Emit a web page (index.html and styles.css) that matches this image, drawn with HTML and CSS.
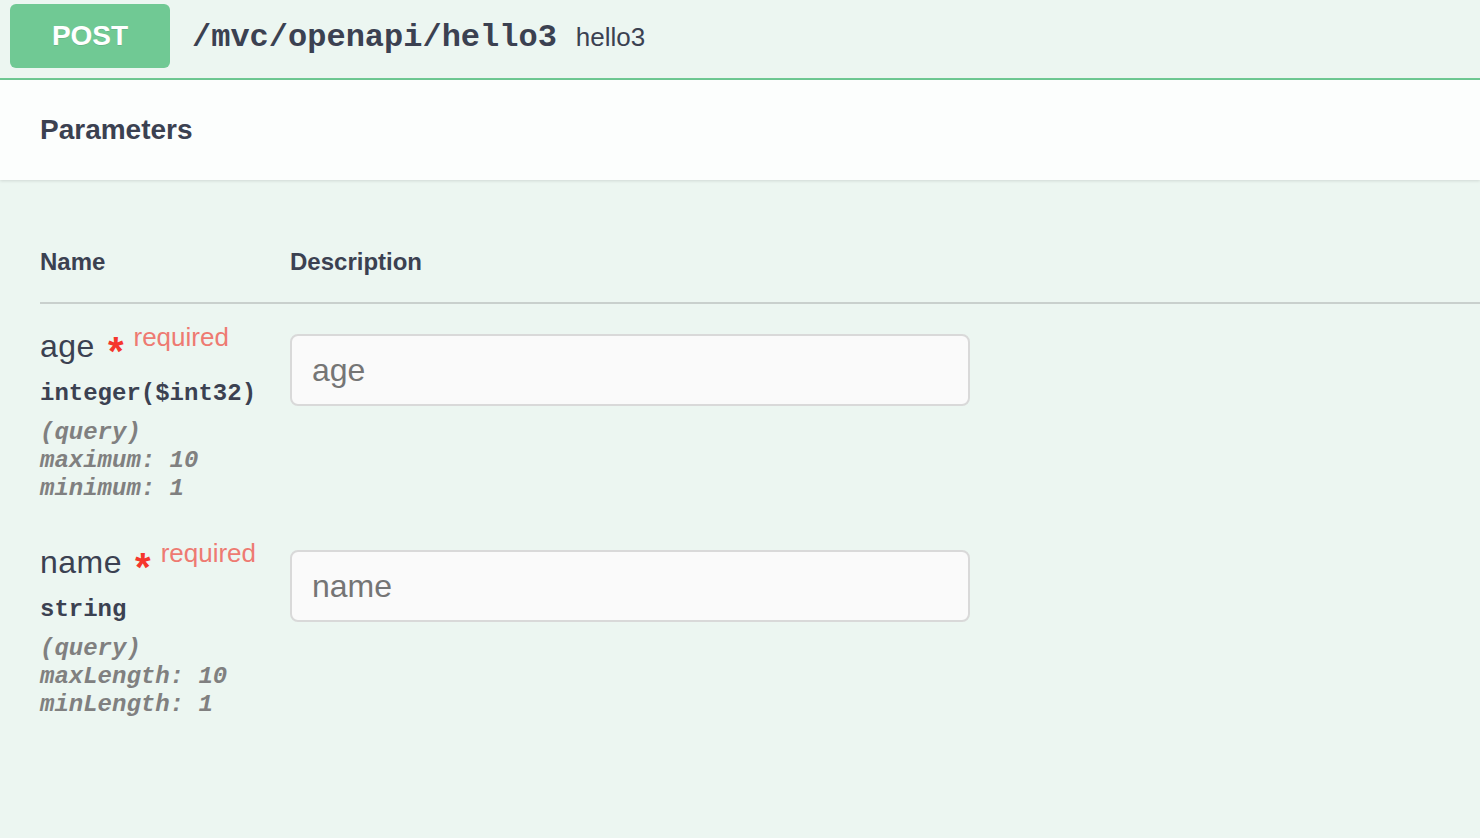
FILE: index.html
```html
<!DOCTYPE html>
<html>
<head>
<meta charset="utf-8">
<link rel="stylesheet" href="styles.css">
</head>
<body>
<div class="opblock">
  <div class="summary">
    <span class="method">POST</span>
    <span class="path">/mvc/openapi/hello3</span>
    <span class="desc">hello3</span>
  </div>
  <div class="section-header">
    <h4 class="title">Parameters</h4>
  </div>
  <div class="params">
    <div class="params-head">
      <div class="col-name">Name</div>
      <div class="col-desc">Description</div>
    </div>
    <div class="param-row">
      <div class="col-name">
        <div class="pname">age<span class="star">*</span><span class="req">required</span></div>
        <div class="ptype">integer($int32)</div>
        <div class="pin">(query)</div>
        <div class="pmeta">maximum: 10</div>
        <div class="pmeta">minimum: 1</div>
      </div>
      <div class="col-desc">
        <input class="pinput" type="text" placeholder="age">
      </div>
    </div>
    <div class="param-row">
      <div class="col-name">
        <div class="pname">name<span class="star">*</span><span class="req">required</span></div>
        <div class="ptype">string</div>
        <div class="pin">(query)</div>
        <div class="pmeta">maxLength: 10</div>
        <div class="pmeta">minLength: 1</div>
      </div>
      <div class="col-desc">
        <input class="pinput" type="text" placeholder="name">
      </div>
    </div>
  </div>
</div>
</body>
</html>
```

FILE: styles.css
```css
html, body {
  margin: 0;
  padding: 0;
  background: #ecf6f1;
  font-family: "Liberation Sans", Arial, sans-serif;
  color: #3b4151;
}
.opblock {
  width: 1480px;
  height: 838px;
  background: #ecf6f1;
  overflow: hidden;
}
.summary {
  display: flex;
  align-items: center;
  height: 64px;
  padding: 4px 0 10px 10px;
  border-bottom: 2px solid #6fc993;
}
.method {
  width: 160px;
  height: 64px;
  border-radius: 6px;
  background: #70c994;
  color: #fff;
  font-weight: 700;
  font-size: 28px;
  display: flex;
  align-items: center;
  justify-content: center;
  text-shadow: 0 1px 0 rgba(0,0,0,.1);
}
.path {
  margin-left: 22px;
  font-family: "Liberation Mono", "Courier New", monospace;
  font-weight: 700;
  font-size: 32px;
  color: #3b4151;
  position: relative;
  top: 1px;
}
.desc {
  margin-left: 19px;
  font-size: 26px;
  color: #3b4151;
  position: relative;
  top: 1px;
}
.section-header {
  height: 100px;
  display: flex;
  align-items: center;
  padding-left: 40px;
  background: rgba(255,255,255,.85);
  box-shadow: 0 1px 3px rgba(0,0,0,.12);
}
.title {
  margin: 0;
  font-size: 28px;
  font-weight: 700;
  color: #3b4151;
}
.params {
  padding-left: 40px;
}
.params-head {
  display: flex;
  padding-top: 66px;
  height: 56px;
  border-bottom: 2px solid #c9d0cd;
  font-size: 24px;
  font-weight: 700;
  color: #3b4151;
}
.col-name {
  width: 250px;
  flex: none;
}
.col-desc {
  flex: 1;
}
.params-head .col-name, .params-head .col-desc {
  line-height: 32px;
}
.param-row {
  display: flex;
  align-items: flex-start;
  padding: 24px 0 17px;
}
.pname {
  font-size: 32px;
  line-height: 36px;
  color: #3b4151;
  white-space: nowrap;
  letter-spacing: 0.5px;
}
.star {
  font-family: "Liberation Sans", Arial, sans-serif;
  font-weight: 700;
  font-size: 40px;
  line-height: 0;
  letter-spacing: 0;
  color: #f5362d;
  margin-left: 13px;
  position: relative;
  top: 8px;
}
.req {
  font-size: 26px;
  letter-spacing: 0;
  color: #ee7a72;
  margin-left: 10px;
  position: relative;
  top: -11px;
}
.ptype {
  margin-top: 14px;
  font-family: "Liberation Mono", "Courier New", monospace;
  font-weight: 700;
  font-size: 24px;
  line-height: 28px;
  color: #3b4151;
}
.pin, .pmeta {
  font-family: "Liberation Mono", "Courier New", monospace;
  font-weight: 700;
  font-style: italic;
  font-size: 24px;
  line-height: 28px;
  color: #808080;
}
.pin {
  margin-top: 11px;
}
.pinput {
  display: block;
  box-sizing: border-box;
  margin-top: 6px;
  width: 680px;
  height: 72px;
  border: 2px solid #d9d9d9;
  border-radius: 8px;
  background: #fafafa;
  padding: 0 20px;
  font-family: "Liberation Sans", Arial, sans-serif;
  font-size: 32px;
  color: #3b4151;
  outline: none;
}
.pinput::placeholder {
  color: #757575;
}
```
